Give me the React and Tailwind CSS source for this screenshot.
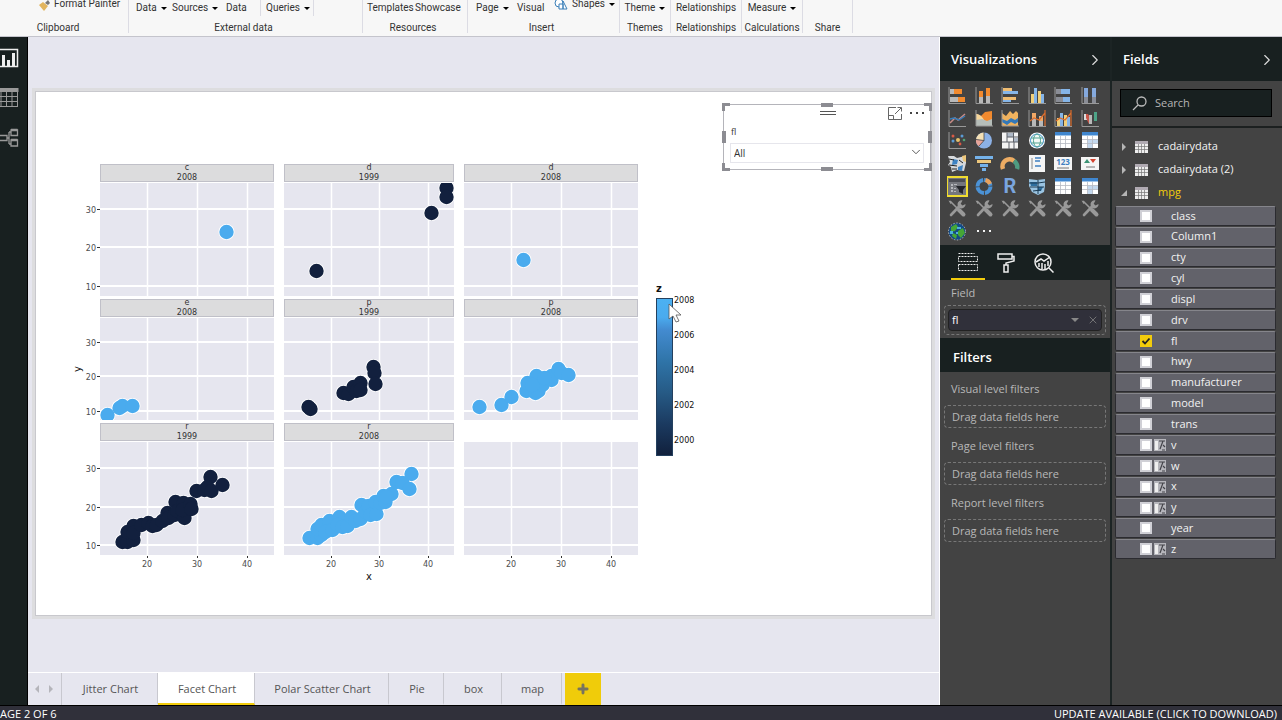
import React, { useState } from 'react';
import { ChevronRight, ChevronDown, X, Plus } from 'lucide-react';

// Facet chart geometry
const cols = [
  { x: 64, w: 174, ticks: [111, 161, 211] },
  { x: 248, w: 170, ticks: [295, 343, 392] },
  { x: 428, w: 174, ticks: [475, 525, 575] },
];

const rows = [
  { strip: 72, y: 91, h: 113, ticks: [117, 155, 194] },
  { strip: 207, y: 226, h: 102, ticks: [250, 284, 319] },
  { strip: 331, y: 350, h: 113, ticks: [376, 415, 453] },
];

const facets = [
  { col: 0, row: 0, name: 'c', year: 2008, points: [[190, 140]] },
  { col: 1, row: 0, name: 'd', year: 1999, points: [[280, 179], [395, 121], [410, 96], [410, 105]] },
  { col: 2, row: 0, name: 'd', year: 2008, points: [[487, 168]] },
  { col: 0, row: 1, name: 'e', year: 2008, points: [[71, 323], [83, 316], [86, 314], [96, 314]] },
  {
    col: 1, row: 1, name: 'p', year: 1999,
    points: [[272, 315], [274, 317], [307, 301], [312, 302], [317, 295], [320, 299], [324, 291], [324, 298], [337, 275], [338, 281], [339, 292]],
  },
  {
    col: 2, row: 1, name: 'p', year: 2008,
    points: [[443, 315], [465, 313], [475, 305], [490, 299], [491, 291], [500, 284], [499, 301], [502, 299], [506, 293], [496, 293], [515, 288], [515, 284], [508, 286], [522, 277], [525, 281], [532, 283]],
  },
  {
    col: 0, row: 2, name: 'r', year: 1999,
    points: [[86, 450], [91, 450], [97, 448], [91, 440], [97, 434], [97, 441], [105, 433], [112, 431], [116, 434], [120, 433], [126, 429], [131, 421], [132, 426], [138, 423], [139, 410], [141, 419], [147, 411], [148, 426], [146, 418], [154, 412], [155, 417], [160, 399], [168, 398], [174, 385], [171, 395], [175, 399], [186, 393]],
  },
  {
    col: 1, row: 2, name: 'r', year: 2008,
    points: [[273, 446], [281, 446], [285, 443], [281, 437], [285, 433], [293, 429], [289, 440], [296, 438], [303, 425], [301, 433], [306, 435], [311, 434], [315, 425], [319, 429], [324, 427], [325, 413], [329, 420], [332, 414], [334, 423], [340, 422], [339, 410], [344, 411], [347, 404], [349, 410], [355, 402], [350, 405], [360, 390], [366, 391], [373, 397], [375, 382]],
  },
];

const yearColor = { 1999: '#12203e', 2008: '#4aabee' };

const FacetChart = () => (
  <svg width="670" height="500" viewBox="0 0 670 500" className="shrink-0" fontFamily="DejaVu Sans, sans-serif" fontSize="8">
    <defs>
      <linearGradient id="scale" x1="0" y1="0" x2="0" y2="1">
        <stop offset="0" stopColor="#4cb1f2" />
        <stop offset="0.12" stopColor="#4aabee" />
        <stop offset="0.2" stopColor="#438bd0" />
        <stop offset="0.4" stopColor="#2f74a8" />
        <stop offset="0.6" stopColor="#265a85" />
        <stop offset="0.8" stopColor="#1b3a60" />
        <stop offset="1" stopColor="#11203c" />
      </linearGradient>
    </defs>
    {rows.map((r, ri) =>
      cols.map((c, ci) => (
        <g key={`${ri}-${ci}`}>
          <clipPath id={`panel-${ri}-${ci}`}>
            <rect x={c.x} y={r.y} width={c.w} height={r.h} />
          </clipPath>
          <rect x={c.x} y={r.y} width={c.w} height={r.h} fill="#e6e6ef" />
          {r.ticks.map((t) => (
            <rect key={t} x={c.x} y={t - 1} width={c.w} height="2" fill="#fff" />
          ))}
          {c.ticks.map((t) => (
            <rect key={t} x={t} y={r.y} width="1" height={r.h} fill="#fff" stroke="#fff" strokeWidth="0.5" />
          ))}
        </g>
      ))
    )}
    {facets.map(({ col, row, name, year, points }) => {
      const c = cols[col];
      const r = rows[row];
      return (
        <g key={`${name}-${year}`}>
          <rect x={c.x + 0.5} y={r.strip + 0.5} width={c.w - 1} height="17" fill="#dcdcdd" stroke="#c0c0c8" />
          <g fill="#333" textAnchor="middle">
            <text x={c.x + c.w / 2} y={r.strip + 6}>{name}</text>
            <text x={c.x + c.w / 2} y={r.strip + 16}>{year}</text>
          </g>
          <g clipPath={`url(#panel-${row}-${col})`}>
            <g fill="#fff">
              {points.map(([x, y], i) => <circle key={i} cx={x + 0.5} cy={y} r="8" />)}
            </g>
            <g fill={yearColor[year]}>
              {points.map(([x, y], i) => <circle key={i} cx={x + 0.5} cy={y} r="7.2" />)}
            </g>
          </g>
        </g>
      );
    })}
    <g fill="#4d4d4d">
      {rows.map((r) =>
        r.ticks.map((t, i) => (
          <g key={t}>
            <text x="60" y={t + 4} textAnchor="end">{30 - i * 10}</text>
            <rect x="61" y={t} width="3" height="1" fill="#333" />
          </g>
        ))
      )}
      {cols.map((c) =>
        c.ticks.map((t, i) => (
          <g key={t}>
            <text x={t} y="475" textAnchor="middle">{20 + i * 10}</text>
            <rect x={t} y="464" width="1" height="2" fill="#333" />
          </g>
        ))
      )}
    </g>
    <g fill="#111" fontSize="10">
      <text x="333" y="488" textAnchor="middle">x</text>
      <text x="45" y="277" textAnchor="middle" transform="rotate(-90 45 277)">y</text>
      <text x="620" y="200" fontWeight="bold">z</text>
    </g>
    <rect x="620.5" y="206.5" width="16" height="157" fill="url(#scale)" stroke="#24405e" />
    <g fill="#111">
      {[2008, 2006, 2004, 2002, 2000].map((year, i) => (
        <text key={year} x="638" y={211 + i * 35}>{year}</text>
      ))}
    </g>
    {/* pointer */}
    <path d="M633 212v15l4-3 3 6 3-1-3-6h5z" fill="#fff" stroke="#555" strokeWidth="0.8" />
  </svg>
);

const Axes = () => <path d="M1 0v16.500h17" fill="none" stroke="#999" />;

const TableGlyph = ({ tint = '#fff' }) => (
  <>
    <path d="M1 1h16v15H1z" fill="#fff" />
    <path d="M6.500 7.500h10.500v4H12v4.500H6.500z" fill={tint} />
    <path d="M1 0h16v3.500H1z" fill="#3f86cf" />
    <path d="M1 7.500h16M1 11.500h16M6.500 4v12M11.500 4v12" stroke="#b5b9c2" strokeWidth="0.800" />
  </>
);

const Tools = () => (
  <>
    <path d="M3 15 12 5.500" stroke="#999" strokeWidth="2.600" strokeLinecap="round" />
    <path d="M14.500 0.500a4 4 0 1 0 3 3.500l-3 1.500-1.800-1.800z" fill="#999" />
    <path d="m2 1 7 7" stroke="#999" strokeWidth="1.600" />
    <path d="m11 10 4.500 4.500" stroke="#999" strokeWidth="4" strokeLinecap="round" />
    <path d="m0.500 0.500 2.500 0.800 0.500 2-1 0.700z" fill="#999" />
  </>
);

const visuals = [
  { name: 'Stacked bar chart', art: <><Axes /><path d="M2 2h5v5H2zM2 10h9v5H2z" fill="#b9b9b9" /><path d="M6 2h8v5H6zM10 10h7v5h-7z" fill="#f28a2e" /></> },
  { name: 'Stacked column chart', art: <><Axes /><path d="M4 9h4v7H4zM11 5h4v11h-4z" fill="#b9b9b9" /><path d="M4 4h4v6H4zM11 1h4v8h-4z" fill="#f28a2e" /></> },
  { name: 'Clustered bar chart', art: <><Axes /><path d="M2 1h9v3H2zM2 10h13v3H2z" fill="#f0bd72" /><path d="M2 4h15v3H2zM2 13h8v2H2z" fill="#85b5e8" /></> },
  { name: 'Clustered column chart', art: <><Axes /><path d="M3 7h3v9H3zM10 4h3v12h-3z" fill="#f0cf7a" /><path d="M6 1h3v15H6zM13 7h3v9h-3z" fill="#85b5e8" /></> },
  { name: '100% stacked bar chart', art: <><Axes /><path d="M2 2h6v5H2zM2 10h9v5H2z" fill="#8a8d96" /><path d="M7 2h9v5H7zM9 10h7v5H9z" fill="#85b5e8" /></> },
  { name: '100% stacked column chart', art: <><Axes /><path d="M3 9h4v7H3zM11 7h4v9h-4z" fill="#8a8d96" /><path d="M3 1h4v9H3zM11 1h4v9h-4z" fill="#85a9dd" /></> },
  { name: 'Line chart', art: <><Axes /><path d="m2 13 5-5 3 2 7-6" fill="none" stroke="#c98b86" strokeWidth="1.500" /><path d="m2 9 4-1 5 2 6-4" fill="none" stroke="#397db8" strokeWidth="1.500" /></> },
  { name: 'Area chart', art: <><path d="M1 4 6 6l4-4 7-1v11L1 14z" fill="#f28a2e" /><path d="M1 4c4-1 8 5 9 8H1z" fill="#f5d59a" /><path d="m1 10 6-1 5 2 5-2v7H1z" fill="#b5bdb9" /><path d="M1 0v16h17" fill="none" stroke="#999" /></> },
  { name: 'Stacked area chart', art: <><path d="m1 3 4 3 4-5 3 3 3-3 2 2v13H1z" fill="#f0b25e" /><path d="m1 9 5 2 4-3 4 2 3-2v4l-3 2-4-2-4 3-5-3z" fill="#3478b8" /><path d="M1 0v16h17" fill="none" stroke="#999" /></> },
  { name: 'Line and stacked column chart', art: <><Axes /><path d="M4 8h4v8H4zM11 6h4v10h-4z" fill="#b9b9b9" /><path d="M4 3h4v5H4zM11 7h4v4h-4z" fill="#f0a765" /><path d="m2 11 4-3 5 2 6-7M17 0v16" fill="none" stroke="#dd6d2c" strokeWidth="1.200" /></> },
  { name: 'Line and clustered column chart', art: <><Axes /><path d="M3 8h3v8H3zM10 5h3v11h-3z" fill="#f0cf7a" /><path d="M6 3h3v13H6zM13 7h3v9h-3z" fill="#85b5e8" /><path d="m2 11 4-3 5 2 6-7M17 0v16" fill="none" stroke="#dd6d2c" strokeWidth="1.200" /></> },
  { name: 'Ribbon chart', art: <><Axes /><path d="M3 4h3v6H3z" fill="#ddd" /><path d="M5 4h2l4 7v3H8L5 8z" fill="#c9574a" /><path d="M8 5h3v9H8z" fill="#b9b9b9" /><path d="M13 2h3v9h-3z" fill="#4da387" /></> },
  { name: 'Scatter chart', art: <><Axes /><circle cx="5" cy="4" r="1.500" fill="#d95a45" /><circle cx="10" cy="8" r="2" fill="#e7c06b" /><circle cx="14" cy="4" r="1.500" fill="#5b9bd5" /><circle cx="5" cy="9" r="1.500" fill="#5b9bd5" /><circle cx="16" cy="8" r="1.300" fill="#52a377" /><circle cx="12" cy="12" r="1.400" fill="#d95a45" /></> },
  { name: 'Pie chart', art: <><circle cx="9" cy="8.500" r="8" fill="#8cb1e6" /><path d="M9 8.500V0.500a8 8 0 0 0-8 7z" fill="#f4e0b5" /><path d="m9 8.500-8-1a8 8 0 0 0 3 7z" fill="#e9a59a" /><path d="M9 0v8.500L1 7.500M9 8.500l-5.500 6" fill="none" stroke="#444" strokeWidth="0.800" /></> },
  { name: 'Treemap', art: <><path d="M1 0.500h16v16H1z" fill="#f4f4f4" /><path d="M6 1h6v4H6zM13 6h4v4h-4z" fill="#aeb9c7" /><path d="M1 10h16M6 0.500V10M12.500 0.500V10M6 5h11M8 10v7M13 10v7" stroke="#5d6168" /></> },
  { name: 'Map', art: <><circle cx="9" cy="8.500" r="8" fill="#fff" /><circle cx="9" cy="8.500" r="6.500" fill="#f4faf6" stroke="#3a8dc7" /><ellipse cx="9" cy="8.500" rx="3.500" ry="6.500" fill="none" stroke="#52a393" /><path d="M3 6h12M3 11h12" stroke="#52a393" /></> },
  { name: 'Table', art: <TableGlyph /> },
  { name: 'Matrix', art: <TableGlyph tint="#c3d8ee" /> },
  { name: 'Filled map', art: <><path d="M0 1h6l3 2 4-1 5-1v7l-2 8-7-1-5 2-1-5-3-2 2-3z" fill="#d6d9dc" /><path d="m5 4 5 1-1 4-5 1zM10 12l5-2-1 6-4-1z" fill="#3f84c4" /><path d="m14 1 4-1v7l-3-1z" fill="#edc77c" /><path d="m1 4 5 1M1 10l8 1M11 5l4 3M4 14h5" stroke="#222" /></> },
  { name: 'Funnel', art: <><path d="M0 1h18v3H0zM5 9h8v3H5zM7 13h4v3H7z" fill="#75b2ea" /><path d="M2 5h14v3H2z" fill="#edc77c" /></> },
  { name: 'Gauge', art: <g fill="none" strokeWidth="4.500"><path d="M2 14a7 7 0 0 1 11-8" stroke="#edac63" /><path d="M13 6a7 7 0 0 1 3 8" stroke="#4f9b81" /></g> },
  { name: 'Multi-row card', art: <><path d="M1 0h16v17H1z" fill="#f5f5f5" /><path d="M4 3v11" stroke="#888" /><path d="M7 3h6M7 6h5M7 11h6" stroke="#3f7fc0" strokeWidth="1.500" /></> },
  { name: 'Card', art: <><path d="M0 2h18v13H0z" fill="#f5f5f5" /><text x="9" y="10" textAnchor="middle" fontSize="8" fontFamily="Open Sans, sans-serif" fontWeight="bold" fill="#3f7fc0">123</text><path d="M3 13h12" stroke="#777" /></> },
  { name: 'KPI', art: <><path d="M0 2h18v13H0z" fill="#f5f5f5" /><path d="m6 4 3 4H3z" fill="#3c9273" /><path d="m12 8 3-4H9z" fill="#d4432f" /><path d="M5 12h9" stroke="#777" /></> },
  { name: 'Slicer', art: <><path d="M0 0h18v17H0z" fill="#74767d" /><path d="M1 1h16v3H1z" fill="#4b4d54" /><path d="M3 6h2v2H3zM3 9h2v2H3zM3 12h2v2H3zM6 6h3v1H6zM6 10h2v1H6zM6 13h2v1H6z" fill="#b5b7bc" /><path d="M8 8h10l-3 4v4l-4-2v-2z" fill="#23252b" /></> },
  { name: 'Donut chart', art: <g fill="none" strokeWidth="4"><circle cx="9" cy="8.500" r="6.500" stroke="#4b92d6" strokeDasharray="9 1" /><path d="M10.500 2a6.500 6.500 0 0 1 4.500 4" stroke="#e9a15c" /></g> },
  { name: 'R script visual', art: <text x="9" y="15" textAnchor="middle" fontSize="20" fontFamily="Roboto, sans-serif" fontWeight="bold" fill="#7aa5de">R</text> },
  { name: 'Shape map', art: <><path d="m1 1 8 1 8-1v7l-1 6-6 3-6-3-3-6z" fill="#9ac4e2" /><path d="M2 4h7v4H3zM10 9h5l-2 4h-3z" fill="#2f6f9f" /><path d="M1 5h9l7-1M2 9h14M5 13l8-1M10 2v14" fill="none" stroke="#1c3b52" /></> },
  { name: 'Table visual', art: <TableGlyph /> },
  { name: 'Matrix visual', art: <TableGlyph tint="#c3d8ee" /> },
  ...[1, 2, 3, 4, 5, 6].map((n) => ({ name: `Custom visual ${n}`, art: <Tools /> })),
  { name: 'Globe map', art: <><circle cx="9" cy="8.500" r="8.500" fill="#134a86" stroke="#ccc" strokeWidth="0.800" strokeDasharray="1.500 1.500" /><path d="m3 4 5-3 2 3-3 4-4 1zM10 8l5-3 2 5-4 5-3-3zM5 10l4 2-1 4-4-3z" fill="#46a636" /><path d="M9 4h4v2H9zM2 8h3v3H2zM8 9h2v2H8z" fill="#4db2d9" /></> },
  { name: 'Import a custom visual', art: <path d="M2 7h2v2H2zM8 7h2v2H8zM14 7h2v2h-2z" fill="#f3f3f3" /> },
];

const tables = ['cadairydata', 'cadairydata (2)', 'mpg'];

const fieldNames = ['class', 'Column1', 'cty', 'cyl', 'displ', 'drv', 'fl', 'hwy', 'manufacturer', 'model', 'trans', 'v', 'w', 'x', 'y', 'year', 'z'];
const calculated = ['v', 'w', 'x', 'y', 'z'];

const pages = [
  { name: 'Jitter Chart', width: 'w-[96px]' },
  { name: 'Facet Chart', width: 'w-[97px]' },
  { name: 'Polar Scatter Chart', width: 'w-[134px]' },
  { name: 'Pie', width: 'w-[55px]' },
  { name: 'box', width: 'w-[58px]' },
  { name: 'map', width: 'w-[60px]' },
];

const RibbonButton = ({ children, menu, className = '' }) => (
  <button type="button" className={`flex shrink-0 items-center gap-1 leading-4 ${className}`}>
    {children}
    {menu && <span className="border-x-[3px] border-t-[3px] border-x-transparent border-t-black"></span>}
  </button>
);

const RibbonGroup = ({ label, className, labelClass = '', children }) => (
  <div className={`mb-[3px] flex h-[33px] shrink-0 flex-col justify-between border-r border-[#dcdce4] ${className}`}>
    <div className="flex h-4 items-end">{children}</div>
    <div className={`text-center leading-[11px] ${labelClass}`}>{label}</div>
  </div>
);

const Ribbon = () => (
  <header className="flex h-[37px] shrink-0 overflow-hidden border-b border-[#c4c4cc] bg-[#f7f7f7] font-['Roboto',sans-serif] text-[10px] text-[#333]">
    <RibbonGroup label="Clipboard" className="w-[129px]" labelClass="pr-[12px]">
      <RibbonButton className="ml-[38px] pb-1">
        <svg width="12" height="14" viewBox="0 0 12 14"><path d="m1 8 4-3 5 4-4 5z" fill="#e2b55e" /><path d="m7 6 3-3 2 3-2 2z" fill="#777" /></svg>
        Format Painter
      </RibbonButton>
    </RibbonGroup>
    <RibbonGroup label="External data" className="w-[234px]" labelClass="pr-1">
      <RibbonButton menu className="ml-[7px] w-[36px]">Data</RibbonButton>
      <RibbonButton menu className="w-[54px]">Sources</RibbonButton>
      <RibbonButton className="w-[35px] border-r border-[#dcdce4]">Data</RibbonButton>
      <RibbonButton menu className="w-[53px] border-r border-[#dcdce4] pl-[5px]">Queries</RibbonButton>
    </RibbonGroup>
    <RibbonGroup label="Resources" className="w-[105px]" labelClass="pr-1">
      <RibbonButton className="ml-1 w-[48px]">Templates</RibbonButton>
      <RibbonButton>Showcase</RibbonButton>
    </RibbonGroup>
    <RibbonGroup label="Insert" className="w-[152px]" labelClass="pr-1">
      <RibbonButton menu className="ml-2 w-[41px]">Page</RibbonButton>
      <RibbonButton className="w-[37px]">Visual</RibbonButton>
      <RibbonButton menu className="pb-1">
        <svg width="14" height="12" viewBox="0 0 14 12" fill="#fff" stroke="#3b7fb8"><circle cx="5" cy="5" r="4" /><path d="M5 11h4V6H5zM9 3l4 8H9z" /></svg>
        Shapes
      </RibbonButton>
    </RibbonGroup>
    <RibbonGroup label="Themes" className="w-[51px]">
      <RibbonButton menu className="mx-auto">Theme</RibbonButton>
    </RibbonGroup>
    <RibbonGroup label="Relationships" className="w-[71px]">
      <RibbonButton className="mx-auto">Relationships</RibbonButton>
    </RibbonGroup>
    <RibbonGroup label="Calculations" className="w-[61px]">
      <RibbonButton menu className="mx-auto">Measure</RibbonButton>
    </RibbonGroup>
    <RibbonGroup label="Share" className="w-[50px]" />
  </header>
);

const ViewRail = () => (
  <nav className="flex w-[28px] shrink-0 flex-col gap-[20px] border-r border-black bg-[#182020] pt-[11px]">
    <button type="button" aria-label="Report" className="h-5">
      <svg width="19" height="20" viewBox="0 0 19 20"><path d="M-1 1.500h18.500v17H-1" fill="none" stroke="#eee" strokeWidth="1.500" /><path d="M2 7h3v11H2zM7 12h3v6H7zM12 5h3v13h-3z" fill="#eee" /></svg>
    </button>
    <button type="button" aria-label="Data" className="h-5">
      <svg width="19" height="20" viewBox="0 0 19 20"><path d="M0 0h18.500v4H0z" fill="#999" /><path d="M0 8.500h18M0 13.500h18M0 18.500h18M1 4v15M6.500 4v15M12 4v15M17.500 4v15" stroke="#999" /></svg>
    </button>
    <button type="button" aria-label="Relationships" className="h-5">
      <svg width="19" height="20" viewBox="0 0 19 20" fill="none" stroke="#999" strokeWidth="1.300"><path d="M0 7.500h7v5H0M7 10h2M9 4v12M9 4h2M9 16h2M11 2h6.500v5.500H11zM11 12h6.500v6H11z" /><path d="M11 2h6.500M11 12h6.500" strokeWidth="2.500" /></svg>
    </button>
  </nav>
);

const handles = [
  '-top-0.5 -left-0.5 h-2 w-2 border-t-3 border-l-3',
  '-top-0.5 -right-0.5 h-2 w-2 border-t-3 border-r-3',
  '-bottom-0.5 -left-0.5 h-2 w-2 border-b-3 border-l-3',
  '-bottom-0.5 -right-0.5 h-2 w-2 border-b-3 border-r-3',
  '-top-0.5 left-1/2 w-3 -translate-x-1/2 border-t-4',
  '-bottom-0.5 left-1/2 w-3 -translate-x-1/2 border-t-4',
  'top-1/2 -left-0.5 h-3 -translate-y-1/2 border-l-4',
  'top-1/2 -right-0.5 h-3 -translate-y-1/2 border-l-4',
];

const Slicer = () => (
  <div className="relative mt-3 ml-auto h-[66px] w-[208px] shrink-0 border border-[#b4b4ba] px-[6px] text-[10px] text-[#333]">
    {handles.map((h) => (
      <span key={h} className={`absolute border-[#8c8c92] ${h}`}></span>
    ))}
    <div className="flex h-4 items-center">
      <span className="ml-[90px] h-1 w-4 border-y border-[#555]"></span>
      <button type="button" aria-label="Focus mode" className="ml-auto">
        <svg width="14" height="13" viewBox="0 0 14 13" fill="none" stroke="#666"><path d="M8 .500H.500v12h13V7M.500 8.500h5v4M7 7l6-6M9.500.500h4v4" /></svg>
      </button>
      <button type="button" aria-label="More options" className="ml-2 flex gap-1">
        <span className="size-0.5 bg-[#444]"></span>
        <span className="size-0.5 bg-[#444]"></span>
        <span className="size-0.5 bg-[#444]"></span>
      </button>
    </div>
    <label htmlFor="slicer" className="block pt-[3px] pl-px text-[9px] leading-4">fl</label>
    <div className="relative mt-[3px]">
      <select id="slicer" className="h-5 w-full appearance-none border border-[#e6e6ec] bg-white pl-[3px]">
        <option>All</option>
      </select>
      <ChevronDown size={14} strokeWidth={1.5} className="pointer-events-none absolute top-0.5 right-px text-[#444]" />
    </div>
  </div>
);

const PageTabs = ({ page, setPage }) => (
  <div className="flex h-[33px] shrink-0 border-t border-white bg-[#e6e6ef] text-[11px] text-[#555]">
    <div className="flex w-[34px] items-center justify-center gap-2.5 border-r border-[#c8c8cf] pr-px">
      <button type="button" aria-label="Previous page" className="border-y-4 border-r-4 border-y-transparent border-r-[#b5b5bb]"></button>
      <button type="button" aria-label="Next page" className="border-y-4 border-l-4 border-y-transparent border-l-[#b5b5bb]"></button>
    </div>
    {pages.map(({ name, width }) => (
      <button
        key={name}
        type="button"
        onClick={() => setPage(name)}
        className={`shrink-0 border-r border-b-2 border-r-[#c8c8cf] pt-0.5 pl-0.5 ${width} ${name === page ? 'border-b-[#f2cc0c] bg-white' : 'border-b-[#e6e6ef]'}`}
      >
        {name}
      </button>
    ))}
    <button type="button" aria-label="New page" className="ml-[3px] flex w-[36px] items-center justify-center bg-[#f0cc0a]">
      <Plus size={14} strokeWidth={5} className="text-[#77735f]" />
    </button>
  </div>
);

const PaneHeader = ({ title }) => (
  <div className="flex h-[44px] items-center justify-between bg-[#182020] pt-0.5 pr-[6px] pl-[11px]">
    <h2 className="text-[13px] font-semibold text-white">{title}</h2>
    <button type="button" aria-label={`Collapse ${title}`}>
      <ChevronRight size={18} strokeWidth={1.5} className="text-[#ddd]" />
    </button>
  </div>
);

const Visualizations = () => (
  <aside className="w-[170px] shrink-0 bg-[#434343] text-[11px] text-[#b8b8b8]">
    <PaneHeader title="Visualizations" />
    <div className="mt-[3px] mr-[7px] ml-1 grid h-[159px] grid-cols-6 grid-rows-7">
      {visuals.map(({ name, art }) => (
        <button
          key={name}
          type="button"
          aria-label={name}
          className={`flex items-center justify-center ${name === 'Slicer' ? 'mx-[3px] my-px border-2 border-[#f0dc30] bg-[#222]' : ''}`}
        >
          <svg width="18" height="17" viewBox="0 0 18 17" className="shrink-0 overflow-visible">{art}</svg>
        </button>
      ))}
    </div>
    <div className="mt-0.5 flex h-[35px] gap-1 bg-[#182020] pl-[11px]">
      <button type="button" aria-label="Fields" className="flex w-[34px] items-center justify-center border-b-2 border-[#f2cc0c]">
        <svg width="20" height="20" viewBox="0 0 20 20" fill="none" stroke="#eee" strokeDasharray="2 1"><path d="M.500 1.500h16M.500 4.500h19v5H.500zM.500 12.500h19v6H.500z" /></svg>
      </button>
      <button type="button" aria-label="Format" className="flex w-[34px] items-center justify-center">
        <svg width="18" height="20" viewBox="0 0 18 20" fill="none" stroke="#eee" strokeWidth="1.500"><path d="M1 1h14v5H1zM15 3.500h2V8l-8 2v2M7 12h4v7H7z" /></svg>
      </button>
      <button type="button" aria-label="Analytics" className="flex w-[34px] items-center justify-center">
        <svg width="20" height="20" viewBox="0 0 20 20" fill="none" stroke="#eee" strokeWidth="1.500"><circle cx="9" cy="9" r="8" /><path d="m15 15 4.500 4.500M2 9l5-3 3 2 6-4M5 10v4M8 10v6M11 11v5M14 8v5" /></svg>
      </button>
    </div>
    <div className="px-1 pt-[5px]">
      <div className="mb-1 pl-[7px] leading-4">Field</div>
      <div className="rounded-sm border border-dashed border-[#777] p-[3px]">
        <div className="flex h-[22px] items-center rounded-sm border border-[#222] bg-[#30303a] pr-0.5 pl-[3px] text-white">
          <span>fl</span>
          <button type="button" aria-label="Field menu" className="mr-2 ml-auto border-x-4 border-t-4 border-x-transparent border-t-[#888]"></button>
          <button type="button" aria-label="Remove field"><X size={12} strokeWidth={1.5} className="text-[#888]" /></button>
        </div>
      </div>
    </div>
    <div className="mt-[3px] flex h-[34px] items-center bg-[#182020] pt-1.5 pl-[13px]">
      <h2 className="text-[13px] font-semibold text-white">Filters</h2>
    </div>
    <div className="flex flex-col gap-2 px-1 pt-[7px]">
      {['Visual', 'Page', 'Report'].map((level) => (
        <section key={level}>
          <h3 className="mb-1.5 pl-[7px] leading-5">{level} level filters</h3>
          <div className="rounded-sm border border-dashed border-[#777] pl-[7px] leading-[21px]">Drag data fields here</div>
        </section>
      ))}
    </div>
  </aside>
);

const Fields = () => {
  const [checked, setChecked] = useState(['fl']);

  const toggle = (name) => {
    setChecked(checked.includes(name) ? checked.filter((n) => n !== name) : [...checked, name]);
  };

  return (
    <aside className="w-[172px] shrink-0 border-l-2 border-[#1c2424] bg-[#434343] text-[11px] text-[#f2f2f2]">
      <PaneHeader title="Fields" />
      <div className="border-b-2 border-[#1c2020] px-2 pt-2 pb-[9px]">
        <label className="mr-0.5 flex h-[28px] items-center gap-2 border border-black bg-[#182020] pl-[11px]">
          <svg width="15" height="15" viewBox="0 0 15 15" fill="none" stroke="#bbb" strokeWidth="1.300" className="shrink-0"><circle cx="9.500" cy="5.500" r="4.500" /><path d="M6 9 1 14" /></svg>
          <input type="text" placeholder="Search" aria-label="Search fields" className="w-full bg-transparent pt-px text-[11px] outline-none placeholder:text-[#b5b5b5]" />
        </label>
      </div>
      <div className="pt-[7px]">
        {tables.map((name) => (
          <button key={name} type="button" className="flex h-[23px] w-full items-center pl-2">
            <svg width="8" height="8" viewBox="0 0 8 8" fill="#b5b5b5" className="mr-[7px]">
              <path d={name === 'mpg' ? 'M7 1v6H1z' : 'M2 0v8l4-4z'} />
            </svg>
            <svg width="13" height="12" viewBox="0 0 13 12" className="mr-[10px]">
              <path d="M0 0h13v12H0z" fill="#eee" />
              <path d="M0 0h13v3H0z" fill="#b0aab2" />
              <path d="M0 5.500h13M0 8.500h13M3.500 3v9M6.500 3v9M9.500 3v9" stroke="#777" strokeWidth="0.700" />
            </svg>
            <span className={name === 'mpg' ? 'text-[#f2cc0c]' : ''}>{name}</span>
          </button>
        ))}
      </div>
      <div className="mr-[6px] ml-[3px] flex h-[355px] flex-col gap-px pt-0.5">
        {fieldNames.map((name) => (
          <label key={name} className="flex flex-1 items-center rounded-xs border border-[#2b2b30] border-t-[#85858b] bg-[#62626a] pl-6">
            <span className="relative flex size-3">
              <input
                type="checkbox"
                checked={checked.includes(name)}
                onChange={() => toggle(name)}
                className="size-3 appearance-none border-2 border-[#d0d0d6] bg-white checked:border-[#f2cc0c] checked:bg-[#f2cc0c]"
              />
              {checked.includes(name) && (
                <svg width="12" height="12" viewBox="0 0 12 12" fill="none" stroke="#222" strokeWidth="1.800" className="pointer-events-none absolute"><path d="m2.500 6 2.500 2.500L9.500 3.500" /></svg>
              )}
            </span>
            <span className="flex w-[19px] justify-center pr-1">
              {calculated.includes(name) && (
                <svg width="12" height="12" viewBox="0 0 12 12"><path d="M0 0h12v12H0z" fill="#b5b5bb" /><path d="M1 2h3v9H1z" fill="#eee" /><path d="M5 2h6M9 2 6 10M8 11h3M9 6l2 2" fill="none" stroke="#44444a" strokeWidth="1.200" /></svg>
              )}
            </span>
            {name}
          </label>
        ))}
      </div>
    </aside>
  );
};

const App = () => {
  const [page, setPage] = useState('Facet Chart');

  return (
    <div className="flex min-h-screen flex-col bg-[#e6e6ef] font-['Open_Sans','Noto_Sans',sans-serif]">
      <Ribbon />
      <div className="flex flex-1">
        <ViewRail />
        <div className="flex min-w-0 flex-1 flex-col border-r border-white">
          <main className="flex flex-1 px-2 pt-[55px] pb-[57px]">
            <div className="flex min-w-0 flex-1 items-start bg-white shadow-[0_0_0_1px_#c8c8cd,0_0_0_4px_#dddddf]">
              <FacetChart />
              <Slicer />
            </div>
          </main>
          <PageTabs page={page} setPage={setPage} />
        </div>
        <Visualizations />
        <Fields />
      </div>
      <footer className="flex h-[15px] shrink-0 items-center justify-between border-t border-black bg-[#30303a] pt-0.5 pr-[5px] text-[11px] leading-3 text-white">
        <span>AGE 2 OF 6</span>
        <button type="button">UPDATE AVAILABLE (CLICK TO DOWNLOAD)</button>
      </footer>
    </div>
  );
};

export default App;
